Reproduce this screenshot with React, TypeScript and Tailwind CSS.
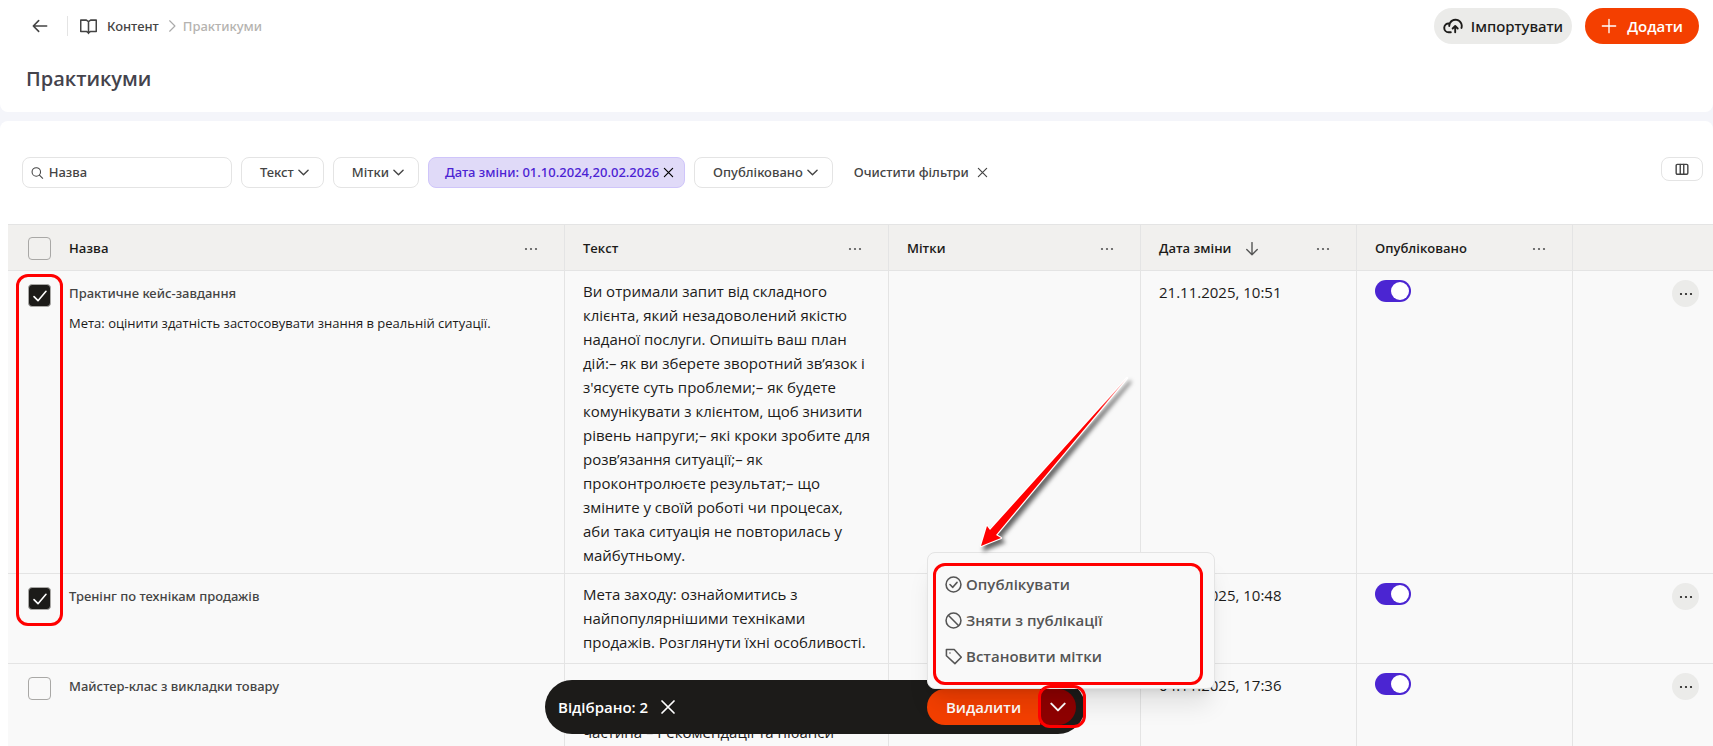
import { useState } from "react";
import type { ReactNode } from "react";
import { PiCloudArrowUpBold } from "react-icons/pi";

type Practicum = {
    id: number;
    title: string;
    description?: string;
    text: string;
    changedAt: string;
};

const practicums: Practicum[] = [
    {
        id: 1,
        title: "Практичне кейс-завдання",
        description: "Мета: оцінити здатність застосовувати знання в реальній ситуації.",
        text: "Ви отримали запит від складного клієнта, який незадоволений якістю наданої послуги. Опишіть ваш план дій:– як ви зберете зворотний зв’язок і з'ясуєте суть проблеми;– як будете комунікувати з клієнтом, щоб знизити рівень напруги;– які кроки зробите для розв’язання ситуації;– як проконтролюєте результат;– що зміните у своїй роботі чи процесах, аби така ситуація не повторилась у майбутньому.",
        changedAt: "21.11.2025, 10:51",
    },
    {
        id: 2,
        title: "Тренінг по технікам продажів",
        text: "Мета заходу: ознайомитись з найпопулярнішими техніками продажів. Розглянути їхні особливості.",
        changedAt: "21.11.2025, 10:48",
    },
    {
        id: 3,
        title: "Майстер-клас з викладки товару",
        text: "Практикум, що складається із взаємопов’язаних етапів. Основна частина – Рекомендації та нюанси",
        changedAt: "04.11.2025, 17:36",
    },
];

function Icon({ children, className, width = "2" }: { children: ReactNode; className: string; width?: string }) {
    return (
        <svg
            viewBox="0 0 24 24"
            fill="none"
            stroke="currentColor"
            strokeWidth={width}
            strokeLinecap="round"
            strokeLinejoin="round"
            aria-hidden="true"
            className={className}
        >
            {children}
        </svg>
    );
}

function Chevron({ className }: { className: string }) {
    return (
        <Icon className={className} width="3">
            <path d="M2 7l10 10L22 7" />
        </Icon>
    );
}

function Cross({ className }: { className: string }) {
    return (
        <Icon className={className} width="2.6">
            <path d="M3 3l18 18M21 3L3 21" />
        </Icon>
    );
}

function Dots({ className }: { className: string }) {
    return (
        <svg viewBox="0 0 14 4" fill="currentColor" aria-hidden="true" className={className}>
            <circle cx="2" cy="2" r="1.1" />
            <circle cx="7" cy="2" r="1.1" />
            <circle cx="12" cy="2" r="1.1" />
        </svg>
    );
}

function Checkbox({ label, checked, onChange }: { label: string; checked: boolean; onChange: () => void }) {
    return (
        <span className="grid size-[23px] shrink-0 place-items-center">
            <input
                type="checkbox"
                aria-label={label}
                checked={checked}
                onChange={onChange}
                className="col-start-1 row-start-1 size-[23px] appearance-none rounded-[4px] border border-[#a9a8a6] checked:bg-[#1c1b19]"
            />
            {checked && (
                <Icon className="pointer-events-none z-0 col-start-1 row-start-1 size-4 text-white" width="2.4">
                    <path d="M3 13l6 6L21 5" />
                </Icon>
            )}
        </span>
    );
}

function FilterButton({ children }: { children: ReactNode }) {
    return (
        <button className="flex h-[31px] items-center gap-1 rounded-lg border border-[#e4e4e4] bg-white pr-3.5 pl-[18px]">
            {children}
            <Chevron className="size-[11px]" />
        </button>
    );
}

function HeadCell({ children, label }: { children: ReactNode; label: string }) {
    return (
        <th className="border-r border-[#e4e4e4] px-[18px] pt-0.5 font-semibold">
            <div className="flex items-center justify-between">
                <div className="flex items-center gap-3.5">{children}</div>
                <button aria-label={label} className="px-2 text-[#555]">
                    <Dots className="h-1 w-3.5" />
                </button>
            </div>
        </th>
    );
}

function MenuItem({ icon, children }: { icon: ReactNode; children: ReactNode }) {
    return (
        <button className="flex h-9 items-center gap-1 px-[17px] text-left">
            <Icon className="size-[17px]" width="2.2">
                {icon}
            </Icon>
            {children}
        </button>
    );
}

export default function App() {
    const [selected, setSelected] = useState<number[]>([1, 2]);

    const toggle = (id: number) => {
        setSelected(selected.includes(id) ? selected.filter((s) => s !== id) : [...selected, id]);
    };

    const toggleAll = () => {
        setSelected(selected.length === practicums.length ? [] : practicums.map((p) => p.id));
    };

    return (
        <div className="relative flex h-screen flex-col gap-[9px] overflow-hidden bg-[#f4f5fa] font-['Open_Sans','Noto_Sans',sans-serif] text-[13px] text-[#1c1b19]">
            <header className="rounded-b-lg bg-white pt-2 pb-[19px]">
                <div className="flex items-center justify-between pr-3.5 pl-8">
                    <nav className="flex items-center font-['Noto_Sans',sans-serif] font-medium">
                        <button aria-label="Назад" className="text-[#444]">
                            <Icon className="size-4" width="2.4">
                                <path d="M22 12H2M10 4l-8 8 8 8" />
                            </Icon>
                        </button>
                        <span className="ml-[19px] h-5 w-px bg-[#e4e4e4]" />
                        <a href="#content" className="ml-3 flex items-center gap-2.5 text-[#444]">
                            <Icon className="size-[17px]" width="2.2">
                                <path d="M12 5v17M1 3h8l3 2 3-2h8v16h-8l-3 2-3-2H1z" />
                            </Icon>
                            <span className="pt-0.5">Контент</span>
                        </a>
                        <Icon className="mr-1 ml-1.5 size-3.5 text-[#aaa]">
                            <path d="M8 3l9 9-9 9" />
                        </Icon>
                        <span className="pt-0.5 text-[#b5b3b0]">Практикуми</span>
                    </nav>
                    <div className="flex gap-[13px] text-[15px]">
                        <button className="flex h-9 items-center gap-2 rounded-full bg-[#ebebe9] px-[9px] font-['Noto_Sans',sans-serif] font-medium">
                            <PiCloudArrowUpBold className="size-5" aria-hidden="true" />
                            Імпортувати
                        </button>
                        <button className="flex h-9 items-center gap-2.5 rounded-full bg-[#f43f00] px-4 font-semibold text-white">
                            <Icon className="size-4">
                                <path d="M12 2v20M2 12h20" />
                            </Icon>
                            Додати
                        </button>
                    </div>
                </div>
                <h1 className="mt-[21px] px-[26px] text-[20px] leading-7 font-semibold text-[#44434c]">Практикуми</h1>
            </header>

            <main className="flex-1 rounded-t-lg bg-white pt-9">
                <div className="flex items-start justify-between pr-2.5 pl-[22px] font-['Noto_Sans',sans-serif] font-medium text-[#444]">
                    <div className="flex items-center gap-[9px]">
                        <label className="flex h-[31px] w-[210px] items-center gap-[5px] rounded-lg border border-[#e4e4e4] px-2">
                            <Icon className="size-3.5">
                                <circle cx="10" cy="10" r="8" />
                                <path d="M16 16l6 6" />
                            </Icon>
                            <input type="text" aria-label="Назва" placeholder="Назва" className="w-full outline-none placeholder:text-[#444]" />
                        </label>
                        <FilterButton>Текст</FilterButton>
                        <FilterButton>Мітки</FilterButton>
                        <button className="flex h-[31px] items-center gap-1 rounded-lg border border-[#cfc5fa] bg-[#e0daf8] pr-2.5 pl-4 text-[#4b22d3]">
                            Дата зміни: 01.10.2024,20.02.2026
                            <Cross className="size-[11px] text-black" />
                        </button>
                        <FilterButton>Опубліковано</FilterButton>
                        <button className="ml-3 flex items-center gap-2">
                            Очистити фільтри
                            <Cross className="size-[11px]" />
                        </button>
                    </div>
                    <button aria-label="Колонки" className="flex h-6 w-[42px] items-center justify-center rounded-lg border border-[#e4e4e4]">
                        <Icon className="size-3.5" width="2.4">
                            <rect x="2" y="4" width="20" height="17" rx="2" />
                            <path d="M9 4v17M15 4v17" />
                        </Icon>
                    </button>
                </div>

                <div className="mt-9 pl-2">
                    <table className="w-full table-fixed border-separate border-spacing-0 bg-[#f9f9f9] text-left">
                        <colgroup>
                            <col className="w-[557px]" />
                            <col className="w-[324px]" />
                            <col className="w-[252px]" />
                            <col className="w-[216px]" />
                            <col className="w-[216px]" />
                            <col />
                        </colgroup>
                        <thead>
                            <tr className="h-[47px] bg-[#f1f0ee] *:border-y *:border-[#e4e4e4]">
                                <th className="border-r pt-0.5 pr-[18px] pl-5 font-semibold">
                                    <div className="flex items-center gap-[18px]">
                                        <Checkbox label="Обрати всі" checked={selected.length === practicums.length} onChange={toggleAll} />
                                        <span className="flex-1">Назва</span>
                                        <button aria-label="Меню колонки Назва" className="px-2 text-[#555]">
                                            <Dots className="h-1 w-3.5" />
                                        </button>
                                    </div>
                                </th>
                                <HeadCell label="Меню колонки Текст">Текст</HeadCell>
                                <HeadCell label="Меню колонки Мітки">Мітки</HeadCell>
                                <HeadCell label="Меню колонки Дата зміни">
                                    Дата зміни
                                    <Icon className="size-3.5 text-[#555]" width="2.4">
                                        <path d="M12 1v21M3 13l9 9 9-9" />
                                    </Icon>
                                </HeadCell>
                                <HeadCell label="Меню колонки Опубліковано">Опубліковано</HeadCell>
                                <th aria-label="Дії" />
                            </tr>
                        </thead>
                        <tbody>
                            {practicums.map((p) => (
                                <tr key={p.id} className="h-[90px] align-top *:border-b *:border-[#e4e4e4]">
                                    <td className="border-r pt-[13px] pr-[18px] pl-5">
                                        <div className="flex gap-[18px]">
                                            <Checkbox label={p.title} checked={selected.includes(p.id)} onChange={() => toggle(p.id)} />
                                            <div className="space-y-3 leading-[18px]">
                                                <p className="font-['Noto_Sans',sans-serif] font-medium text-[#444]">{p.title}</p>
                                                {p.description && <p>{p.description}</p>}
                                            </div>
                                        </div>
                                    </td>
                                    <td className="border-r pt-2 pr-4 pb-1.5 pl-[18px] text-[15px] leading-6">{p.text}</td>
                                    <td className="border-r" />
                                    <td className="border-r px-[18px] pt-[9px] text-[15px] leading-6">{p.changedAt}</td>
                                    <td className="border-r px-[18px] pt-[9px]">
                                        <input
                                            type="checkbox"
                                            role="switch"
                                            aria-label={"Опубліковано: " + p.title}
                                            defaultChecked
                                            className="flex h-[22px] w-9 appearance-none items-center rounded-full bg-gray-300 p-0.5 before:size-[18px] before:rounded-full before:bg-white checked:justify-end checked:bg-[#4b25d2]"
                                        />
                                    </td>
                                    <td className="pt-[9px] pr-3.5">
                                        <button aria-label={"Дії: " + p.title} className="ml-auto flex size-[27px] items-center justify-center rounded-full bg-[#ebebe9]">
                                            <Dots className="h-1 w-3.5" />
                                        </button>
                                    </td>
                                </tr>
                            ))}
                        </tbody>
                    </table>
                </div>
            </main>

            {/* bulk actions bar */}
            <div className="absolute bottom-3 left-[545px] flex h-[54px] w-[540px] items-center justify-between rounded-full bg-[#1c1b19] pr-[9px] pl-[13px] text-[15px] font-semibold text-white">
                <div className="flex items-center gap-3">
                    Відібрано: {selected.length}
                    <button aria-label="Скасувати вибір" onClick={() => setSelected([])}>
                        <Cross className="size-4" />
                    </button>
                </div>
                <div className="flex h-9 overflow-hidden rounded-full">
                    <button className="w-[113px] bg-[#f43f00]">Видалити</button>
                    <button aria-label="Інші дії" className="flex w-9 items-center justify-center bg-[#8f0000]">
                        <Chevron className="size-4" />
                    </button>
                </div>
            </div>

            <div className="absolute bottom-[57px] left-[927px] flex h-[137px] w-[288px] flex-col rounded-lg border border-[#e4e4e4] bg-[#f9f9f9] pt-[13px] text-[15px] font-semibold text-[#555] shadow-xl">
                <MenuItem
                    icon={
                        <>
                            <circle cx="12" cy="12" r="10.5" />
                            <path d="M7 12l4 4 6-7" />
                        </>
                    }
                >
                    Опублікувати
                </MenuItem>
                <MenuItem
                    icon={
                        <>
                            <circle cx="12" cy="12" r="10.5" />
                            <path d="M5 5l14 14" />
                        </>
                    }
                >
                    Зняти з публікації
                </MenuItem>
                <MenuItem
                    icon={
                        <>
                            <path d="M2 2h11l10 11-9 9L2 11z" />
                            <path d="M7 7h.01" />
                        </>
                    }
                >
                    Встановити мітки
                </MenuItem>
            </div>

            {/* callouts */}
            <div className="pointer-events-none absolute top-[274px] left-4 h-[352px] w-[47px] rounded-xl border-3 border-[#f00]" />
            <div className="pointer-events-none absolute bottom-[61px] left-[933px] h-[122px] w-[270px] rounded-xl border-3 border-[#f00]" />
            <div className="pointer-events-none absolute bottom-[18px] left-[1038px] h-[43px] w-12 rounded-xl border-3 border-[#f00]" />
            <svg viewBox="0 0 170 190" className="pointer-events-none absolute top-[370px] left-[970px] h-[190px] w-[170px] drop-shadow-[3px_4px_2px_rgba(0,0,0,0.6)]">
                <defs>
                    <linearGradient id="arrow" x1="0" y1="1" x2="1" y2="0">
                        <stop offset="0.8" stopColor="#f00" />
                        <stop offset="1" stopColor="#fcc" />
                    </linearGradient>
                </defs>
                <path
                    d="M11 176l6-20 3 4L157 8 26 165l5 3z"
                    fill="url(#arrow)"
                    stroke="#fff"
                    strokeWidth="2.4"
                    strokeLinejoin="round"
                    paintOrder="stroke"
                />
            </svg>
        </div>
    );
}
